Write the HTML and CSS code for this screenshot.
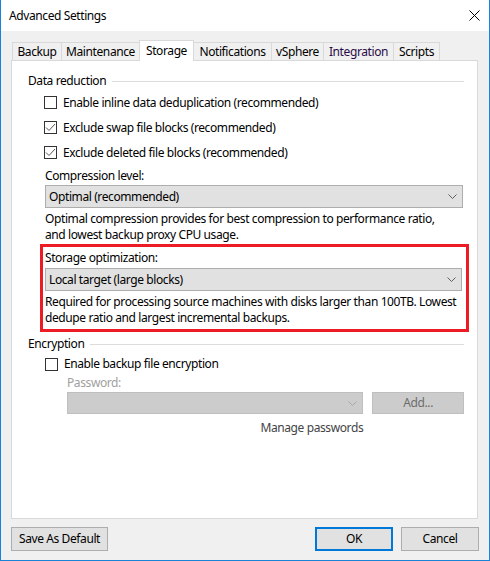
FILE: index.html
```html
<!DOCTYPE html>
<html lang="en">
<head>
<meta charset="utf-8">
<title>Advanced Settings</title>
<link rel="stylesheet" href="styles.css">
</head>
<body>
<div class="window">
  <div class="titlebar">
    <span class="title">Advanced Settings</span>
    <svg class="close" width="11" height="11" viewBox="0 0 11 11"><path d="M0.5 0.5 L10.5 10.5 M10.5 0.5 L0.5 10.5" stroke="#000" stroke-width="1" fill="none"/></svg>
  </div>
  <div class="client">
    <div class="tabs">
      <div class="tab w-backup">Backup</div>
      <div class="tab w-maint">Maintenance</div>
      <div class="tab active w-storage">Storage</div>
      <div class="tab w-notif">Notifications</div>
      <div class="tab w-vsphere">vSphere</div>
      <div class="tab hot w-integ">Integration</div>
      <div class="tab w-scripts">Scripts</div>
    </div>
    <div class="panel">
      <div class="group">
        <div class="group-head"><span>Data reduction</span><span class="rule"></span></div>
        <div class="group-body">
          <div class="check first"><span class="box"></span><span>Enable inline data deduplication (recommended)</span></div>
          <div class="check"><span class="box"><svg width="11" height="11" viewBox="0 0 11 11"><path d="M1 5.5 L4 8.5 L10 2" stroke="#555" stroke-width="1" fill="none"/></svg></span><span>Exclude swap file blocks (recommended)</span></div>
          <div class="check"><span class="box"><svg width="11" height="11" viewBox="0 0 11 11"><path d="M1 5.5 L4 8.5 L10 2" stroke="#555" stroke-width="1" fill="none"/></svg></span><span>Exclude deleted file blocks (recommended)</span></div>
          <div class="field compress">
            <div class="label">Compression level:</div>
            <div class="select"><span>Optimal (recommended)</span><svg class="chev" width="9" height="5" viewBox="0 0 9 5"><path d="M0.5 0.5 L4.5 4.5 L8.5 0.5" stroke="#606060" stroke-width="1" fill="none"/></svg></div>
            <div class="desc">Optimal compression provides for best compression to performance ratio,<br>and lowest backup proxy CPU usage.</div>
          </div>
          <div class="highlight">
            <div class="label">Storage optimization:</div>
            <div class="select"><span>Local target (large blocks)</span><svg class="chev" width="9" height="5" viewBox="0 0 9 5"><path d="M0.5 0.5 L4.5 4.5 L8.5 0.5" stroke="#606060" stroke-width="1" fill="none"/></svg></div>
            <div class="desc">Required for processing source machines with disks larger than 100TB. Lowest<br>dedupe ratio and largest incremental backups.</div>
          </div>
        </div>
      </div>
      <div class="group enc">
        <div class="group-head"><span>Encryption</span><span class="rule"></span></div>
        <div class="group-body">
          <div class="check short"><span class="box"></span><span>Enable backup file encryption</span></div>
          <div class="password">
            <div class="label disabled">Password:</div>
            <div class="pw-row">
              <div class="pw-col">
                <div class="select dis"><span></span><svg class="chev" width="9" height="5" viewBox="0 0 9 5"><path d="M0.5 0.5 L4.5 4.5 L8.5 0.5" stroke="#a8a8a8" stroke-width="1" fill="none"/></svg></div>
                <div class="manage">Manage passwords</div>
              </div>
              <div class="btn dis-btn">Add...</div>
            </div>
          </div>
        </div>
      </div>
    </div>
    <div class="footer">
      <div class="btn save">Save As Default</div>
      <div class="spacer"></div>
      <div class="btn ok">OK</div>
      <div class="btn cancel">Cancel</div>
    </div>
  </div>
</div>
</body>
</html>
```
FILE: styles.css
```css
* { box-sizing: border-box; }
html, body { margin: 0; padding: 0; }
body {
  font-family: "Noto Sans", "Open Sans", sans-serif;
  font-size: 12px;
  line-height: 16px;
  letter-spacing: -0.4px;
  color: #000;
  background: #fff;
}
.window {
  width: 490px;
  height: 561px;
  border: 1px solid #1883d7;
  border-top: 0;
  display: flex;
  flex-direction: column;
  background: #f0f0f0;
}
.titlebar {
  height: 31px;
  background: #fff;
  display: flex;
  align-items: center;
  padding-left: 8px;
  padding-right: 9px;
  justify-content: space-between;
}
.title { font-size: 12px; }
.client {
  flex: 1;
  display: flex;
  flex-direction: column;
}
.tabs {
  display: flex;
  align-items: flex-end;
  height: 20px;
  margin-top: 9px;
  margin-left: 11px;
  position: relative;
  z-index: 1;
}
.tab {
  height: 18px;
  border: 1px solid #d9d9d9;
  border-bottom: 0;
  border-right: 0;
  line-height: 17px;
  text-align: center;
  white-space: nowrap;
  background: #f0f0f0;
}
.w-backup { width: 49px; }
.w-maint { width: 78px; }
.w-storage { width: 55px; }
.w-notif { width: 77px; }
.w-vsphere { width: 52px; }
.w-integ { width: 70px; }
.w-scripts { width: 47px; }
.tab:last-child { border-right: 1px solid #d9d9d9; }
.tab.active {
  height: 21px;
  margin-bottom: -1px;
  background: #fff;
  border-right: 1px solid #d9d9d9;
  line-height: 19px;
}
.tab.active + .tab { border-left: 0; }
.tab.hot { color: #2a0a48; }
.panel {
  margin-left: 10px;
  width: 467px;
  height: 459px;
  background: #fff;
  border: 1px solid #d9d9d9;
  padding: 12px 13px 0 16px;
}
.group-head {
  display: flex;
  align-items: center;
  height: 16px;
}
.rule {
  flex: 1;
  height: 1px;
  background: #dcdcdc;
  margin-left: 6px;
  margin-top: 1px;
}
.group-body {
  padding-left: 16px;
  display: flex;
  flex-direction: column;
}
.check {
  height: 25px;
  display: flex;
  align-items: center;
}
.check.first { margin-top: 1px; }
.check.short { height: 22px; margin-top: 1px; margin-left: 1px; }
.box {
  width: 13px;
  height: 13px;
  border: 1px solid #333;
  background: #fff;
  margin-right: 6px;
  display: flex;
  align-items: center;
  justify-content: center;
}
.field { margin-left: 1px; margin-right: 1px; }
.compress .label { margin-top: 3px; }
.select {
  height: 23px;
  background: #e1e1e1;
  border: 1px solid #adadad;
  display: flex;
  align-items: center;
  justify-content: space-between;
  padding: 0 5px 0 3px;
  margin-top: 1px;
}
.desc { margin-top: 3px; white-space: nowrap; }
.highlight {
  margin-left: -4px;
  width: 429px;
  margin-top: 1px;
  border: 3px solid #ed1c24;
  padding: 3px 4px 3px 2px;
}
.highlight .select { margin-top: 2px; }
.enc { margin-top: 4px; }
.password { margin-left: 23px; }
.label.disabled { color: #a0a0a0; }
.pw-row {
  display: flex;
  align-items: flex-start;
  gap: 9px;
  margin-top: 1px;
}
.pw-col { width: 297px; }
.select.dis {
  height: 22px;
  margin-top: 0;
  background: #cccccc;
  border-color: #bfbfbf;
}
.manage {
  text-align: right;
  margin-top: 6px;
  color: #444;
}
.btn {
  height: 24px;
  background: #e1e1e1;
  border: 1px solid #adadad;
  display: flex;
  align-items: center;
  justify-content: center;
}
.dis-btn {
  width: 92px;
  height: 22px;
  background: #cccccc;
  border-color: #bfbfbf;
  color: #6d6d6d;
}
.footer {
  display: flex;
  margin-top: 8px;
  margin-left: 10px;
  padding-right: 10px;
}
.spacer { flex: 1; }
.save { width: 97px; }
.ok { width: 78px; border: 2px solid #0078d7; margin-right: 8px; }
.cancel { width: 78px; }
```
